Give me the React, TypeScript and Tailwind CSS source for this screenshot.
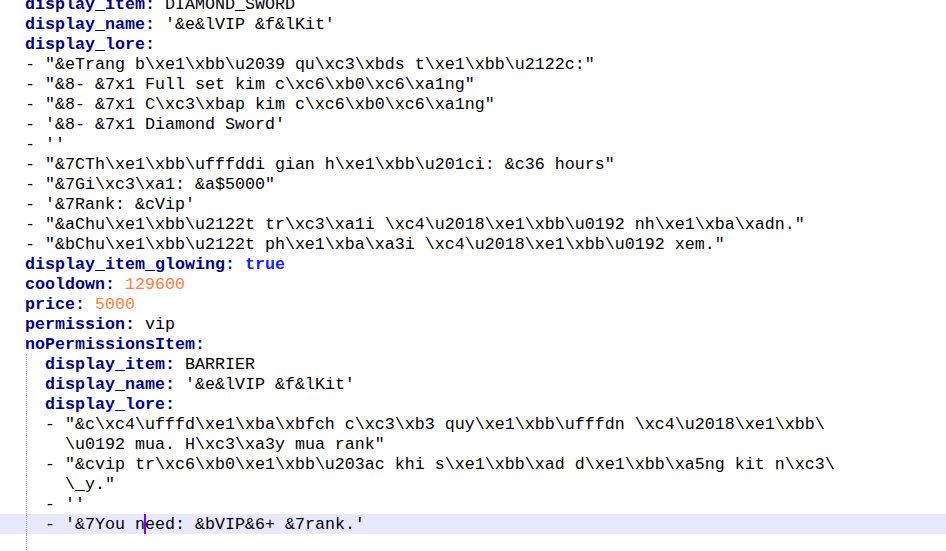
import React from "react";

type Seg = { t: string; k?: "key" | "num" | "bool" | "cursor" };

const key = (t: string): Seg => ({ t, k: "key" });
const txt = (t: string): Seg => ({ t });
const num = (t: string): Seg => ({ t, k: "num" });

type Line = { segs: Seg[]; nested?: boolean; active?: boolean };

const lines: Line[] = [
  { segs: [key("display_item:"), txt(" DIAMOND_SWORD")] },
  { segs: [key("display_name:"), txt(" '&e&lVIP &f&lKit'")] },
  { segs: [key("display_lore:")] },
  { segs: [txt('- "&eTrang b\\xe1\\xbb\\u2039 qu\\xc3\\xbds t\\xe1\\xbb\\u2122c:"')] },
  { segs: [txt('- "&8- &7x1 Full set kim c\\xc6\\xb0\\xc6\\xa1ng"')] },
  { segs: [txt('- "&8- &7x1 C\\xc3\\xbap kim c\\xc6\\xb0\\xc6\\xa1ng"')] },
  { segs: [txt("- '&8- &7x1 Diamond Sword'")] },
  { segs: [txt("- ''")] },
  { segs: [txt('- "&7CTh\\xe1\\xbb\\ufffddi gian h\\xe1\\xbb\\u201ci: &c36 hours"')] },
  { segs: [txt('- "&7Gi\\xc3\\xa1: &a$5000"')] },
  { segs: [txt("- '&7Rank: &cVip'")] },
  { segs: [txt('- "&aChu\\xe1\\xbb\\u2122t tr\\xc3\\xa1i \\xc4\\u2018\\xe1\\xbb\\u0192 nh\\xe1\\xba\\xadn."')] },
  { segs: [txt('- "&bChu\\xe1\\xbb\\u2122t ph\\xe1\\xba\\xa3i \\xc4\\u2018\\xe1\\xbb\\u0192 xem."')] },
  { segs: [key("display_item_glowing:"), txt(" "), { t: "true", k: "bool" }] },
  { segs: [key("cooldown:"), txt(" "), num("129600")] },
  { segs: [key("price:"), txt(" "), num("5000")] },
  { segs: [key("permission:"), txt(" vip")] },
  { segs: [key("noPermissionsItem:")] },
  { nested: true, segs: [key("display_item:"), txt(" BARRIER")] },
  { nested: true, segs: [key("display_name:"), txt(" '&e&lVIP &f&lKit'")] },
  { nested: true, segs: [key("display_lore:")] },
  { nested: true, segs: [txt('- "&c\\xc4\\ufffd\\xe1\\xba\\xbfch c\\xc3\\xb3 quy\\xe1\\xbb\\ufffdn \\xc4\\u2018\\xe1\\xbb\\')] },
  { nested: true, segs: [txt('  \\u0192 mua. H\\xc3\\xa3y mua rank"')] },
  { nested: true, segs: [txt('- "&cvip tr\\xc6\\xb0\\xe1\\xbb\\u203ac khi s\\xe1\\xbb\\xad d\\xe1\\xbb\\xa5ng kit n\\xc3\\')] },
  { nested: true, segs: [txt('  \\_y."')] },
  { nested: true, segs: [txt("- ''")] },
  { nested: true, active: true, segs: [txt("- '&7You n"), { t: "eed: &bVIP&6+ &7rank.'", k: "cursor" }] },
  { nested: true, segs: [] },
];

const segClass = (k?: Seg["k"]) => {
  if (k === "key") return "pt-px font-bold text-[#000080]";
  if (k === "num") return "pt-px text-[#ff8040]";
  if (k === "bool") return "pt-px font-bold text-[#2020ff]";
  if (k === "cursor") return "pt-px text-black shadow-[-1px_0_0_#8000ff,inset_1px_0_0_#8000ff]";
  return "pt-px text-black";
};

const App = () => {
  return (
    <div
      className="h-[551px] w-[946px] overflow-hidden bg-white text-[16.67px]"
      style={{ fontFamily: '"Liberation Mono", "Courier New", monospace' }}
    >
      <div className="-mt-[6px] flex flex-col">
        {lines.map((line, i) => (
          <div
            key={i}
            className={`flex h-5 items-stretch overflow-hidden pl-[25px] leading-5 whitespace-pre ${
              line.active ? "bg-[#e8e8ff]" : ""
            }`}
          >
            {/* ==== indent guide ==== */}
            {line.nested && (
              <span className="ml-px w-[19px] shrink-0 border-l border-dotted border-[#b4b4b4]" />
            )}
            {line.segs.map((s, j) => (
              <span key={j} className={segClass(s.k)}>
                {s.t}
              </span>
            ))}
          </div>
        ))}
      </div>
    </div>
  );
};

export default App;
